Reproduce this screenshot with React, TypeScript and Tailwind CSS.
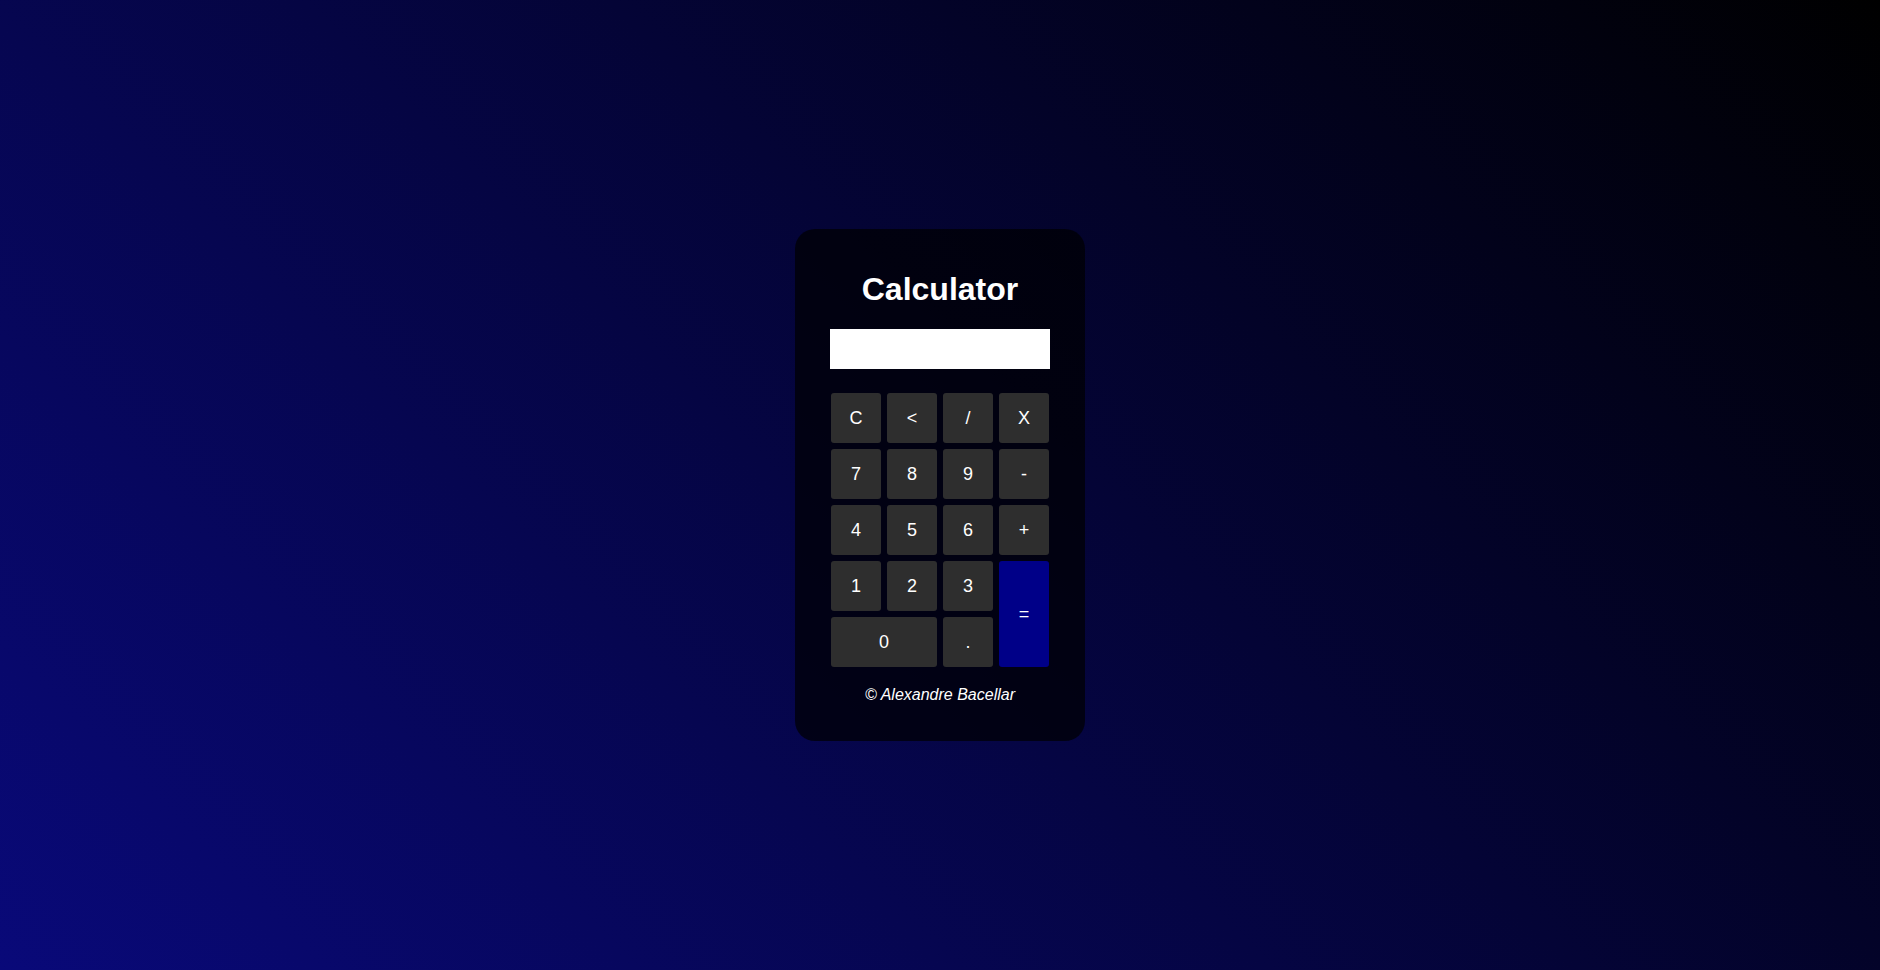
import { useState } from 'react';

const keys: { label: string; span?: string; bg?: string }[] = [
  { label: 'C' },
  { label: '<' },
  { label: '/' },
  { label: 'X' },
  { label: '7' },
  { label: '8' },
  { label: '9' },
  { label: '-' },
  { label: '4' },
  { label: '5' },
  { label: '6' },
  { label: '+' },
  { label: '1' },
  { label: '2' },
  { label: '3' },
  { label: '=', span: 'row-span-2', bg: 'bg-[#000088]' },
  { label: '0', span: 'col-span-2' },
  { label: '.' },
];

export default function App() {
  const [display, setDisplay] = useState('');

  const press = (k: string) => {
    if (k === 'C') return setDisplay('');
    if (k === '<') return setDisplay((d) => d.slice(0, -1));
    if (k === '=') {
      try {
        // eslint-disable-next-line no-new-func
        const r = Function(`return (${display.replace(/X/g, '*')})`)();
        setDisplay(String(r));
      } catch {
        setDisplay('Erro');
      }
      return;
    }
    setDisplay((d) => d + k);
  };

  return (
    <div
      className="flex h-[970px] w-full items-start justify-center bg-[linear-gradient(45deg,#090979,#000000)]"
      style={{ fontFamily: '"Liberation Sans", Arial, sans-serif' }}
    >
      <div className="mt-[229px] flex w-[290px] flex-col items-center rounded-[20px] bg-black/70 px-[35px] pt-[42px] pb-[37px] text-white">
        {/* Title */}
        <h1 className="text-[32px] font-bold leading-[37px]">Calculator</h1>

        {/* Display */}
        <input
          readOnly
          value={display}
          className="mt-[21px] h-[40px] w-[220px] bg-white px-2 text-right text-[20px] text-black outline-none"
        />

        {/* Keypad */}
        <div className="mt-[24px] grid grid-cols-[repeat(4,50px)] auto-rows-[50px] gap-[6px]">
          {keys.map((k) => (
            <button
              key={k.label}
              onClick={() => press(k.label)}
              className={`flex items-center justify-center rounded-[3px] text-[18px] text-white ${k.span ?? ''} ${k.bg ?? 'bg-[#2e2e2e]'}`}
            >
              {k.label}
            </button>
          ))}
        </div>

        {/* Footer */}
        <p className="mt-[19px] text-[16px] italic leading-[18px]">© Alexandre Bacellar</p>
      </div>
    </div>
  );
}
